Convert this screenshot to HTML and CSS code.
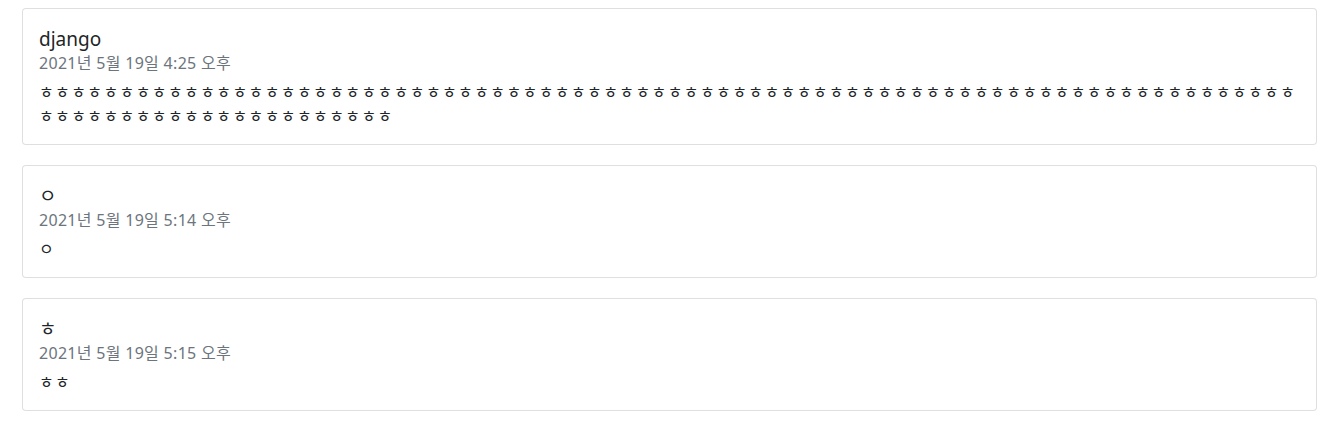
FILE: index.html
```
<!doctype html>
<html lang="ko">

<head>
    <meta charset="UTF-8" />
    <meta name="viewport" content="width=device-width, initial-scale=1" />
    <title>Posts</title>
    <link rel="stylesheet" href="styles.css">
</head>

<body>
    <div class="container">
        <div class="card">
            <div class="card-body">
                <h5 class="card-title">django</h5>
                <h6 class="card-subtitle">2021년 5월 19일 4:25 오후</h6>
                <p class="card-text">ㅎㅎㅎㅎㅎㅎㅎㅎㅎㅎㅎㅎㅎㅎㅎㅎㅎㅎㅎㅎㅎㅎㅎㅎㅎㅎㅎㅎㅎㅎㅎㅎㅎㅎㅎㅎㅎㅎㅎㅎㅎㅎㅎㅎㅎㅎㅎㅎㅎㅎㅎㅎㅎㅎㅎㅎㅎㅎㅎㅎㅎㅎㅎㅎㅎㅎㅎㅎㅎㅎㅎㅎㅎㅎㅎㅎㅎㅎㅎㅎㅎㅎㅎㅎㅎㅎㅎㅎㅎㅎㅎㅎㅎㅎㅎㅎㅎㅎㅎㅎ</p>
            </div>
        </div>

        <div class="card">
            <div class="card-body">
                <h5 class="card-title">ㅇ</h5>
                <h6 class="card-subtitle">2021년 5월 19일 5:14 오후</h6>
                <p class="card-text">ㅇ</p>
            </div>
        </div>

        <div class="card">
            <div class="card-body">
                <h5 class="card-title">ㅎ</h5>
                <h6 class="card-subtitle">2021년 5월 19일 5:15 오후</h6>
                <p class="card-text">ㅎㅎ</p>
            </div>
        </div>
    </div>
</body>

</html>
```

FILE: styles.css
```
body {
    font-family: "Noto Sans", "Noto Sans CJK KR", sans-serif;
    font-size: 16px;
    line-height: 1.5;
    color: #212529;
    background: #fff;
    margin: 0;
    padding: 0;
}

.container {
    padding: 8px 20px 0 22px;
}

.card {
    border: 1px solid rgba(0, 0, 0, 0.125);
    border-radius: 0.25rem;
    margin-bottom: 20px;
    background-color: #fff;
}

.card-body {
    padding: 18px 16px 16px;
}

.card-title {
    font-size: 19px;
    font-weight: 400;
    line-height: 24px;
    margin: 0;
}

.card-subtitle {
    font-size: 16px;
    font-weight: 400;
    line-height: 24px;
    letter-spacing: 0.3px;
    color: #6c757d;
    margin: 0 0 5px 0;
}

.card-text {
    font-size: 16px;
    line-height: 24px;
    letter-spacing: 1.4px;
    margin: 0;
    word-break: break-all;
}
```
